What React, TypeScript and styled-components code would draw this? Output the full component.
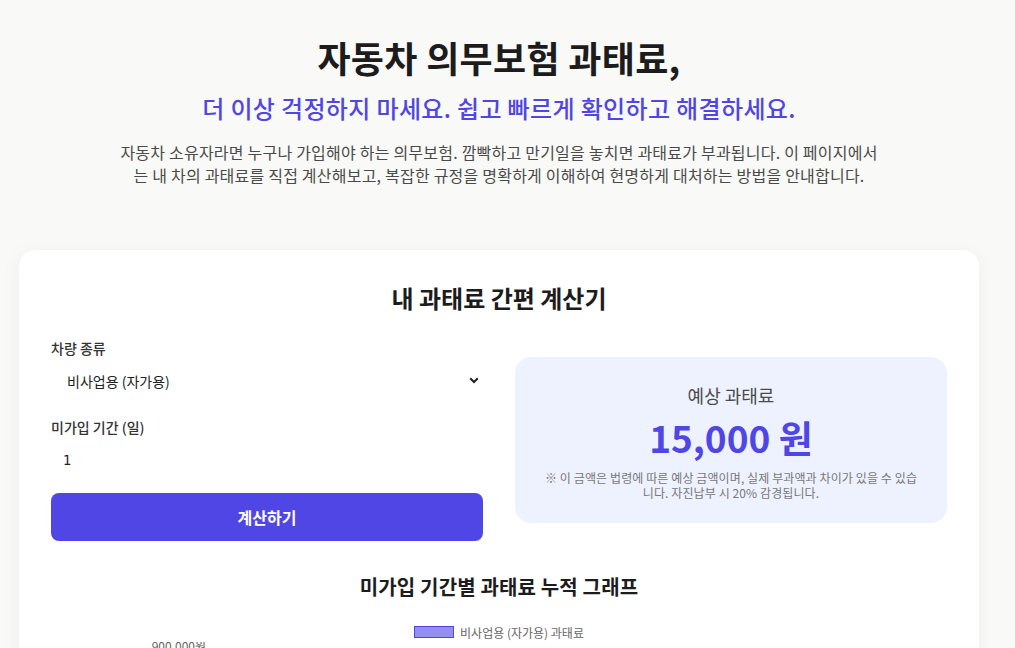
import React, { useState } from "react";
import styled, { createGlobalStyle } from "styled-components";

const GlobalStyle = createGlobalStyle`
  html, body { margin: 0; padding: 0; }
  body {
    background: #f9f9f7;
    font-family: "Noto Sans CJK KR", "Noto Sans", sans-serif;
    color: #1f1f1f;
    overflow: hidden;
  }
  * { box-sizing: border-box; }
`;

const Page = styled.div`
  width: 998px;
  padding-top: 34px;
`;

const Main = styled.main`
  max-width: 960px;
  margin: 0 auto;
`;

const Hero = styled.header`
  text-align: center;
  margin-bottom: 63px;
`;

const Title = styled.h1`
  margin: 0 0 10px;
  font-size: 36px;
  line-height: 47px;
  font-weight: 700;
  letter-spacing: 0.3px;
  color: #1c1c1c;
`;

const Subtitle = styled.h2`
  margin: 0 0 16px;
  font-size: 24px;
  line-height: 34px;
  font-weight: 500;
  letter-spacing: 0.35px;
  color: #4f46e5;
`;

const Intro = styled.p`
  margin: 0 auto;
  max-width: 762px;
  font-size: 16px;
  line-height: 23px;
  letter-spacing: 0.22px;
  color: #4a4a4a;
`;

const Card = styled.section`
  background: #ffffff;
  border-radius: 16px;
  padding: 32px;
  box-shadow: 0 4px 20px rgba(0, 0, 0, 0.05);
`;

const CardTitle = styled.h3`
  margin: 0 0 24px;
  text-align: center;
  font-size: 24px;
  line-height: 32px;
  font-weight: 700;
  color: #1c1c1c;
`;

const Grid = styled.div`
  display: grid;
  grid-template-columns: 1fr 1fr;
  gap: 32px;
  align-items: center;
`;

const Form = styled.div`
  display: flex;
  flex-direction: column;
`;

const Field = styled.div<{ $mb?: number }>`
  display: flex;
  flex-direction: column;
  margin-bottom: ${(p) => p.$mb ?? 20}px;
`;

const Label = styled.label`
  font-size: 14px;
  line-height: 20px;
  font-weight: 500;
  color: #333;
  margin-bottom: 6px;
`;

const SelectWrap = styled.div`
  position: relative;
`;

const Select = styled.select`
  appearance: none;
  width: 100%;
  height: 33px;
  border: none;
  background: #fff;
  padding: 1px 24px 0 16px;
  font-family: "Noto Sans CJK KR", sans-serif;
  font-size: 14px;
  color: #222;
  outline: none;
`;

const Chevron = styled.svg`
  position: absolute;
  right: 4px;
  top: 13px;
  pointer-events: none;
`;

const Input = styled.input`
  width: 100%;
  height: 34px;
  border: none;
  background: #fff;
  padding: 0 12px;
  font-family: "DejaVu Sans", sans-serif;
  font-size: 13.333px;
  color: #222;
  outline: none;
`;

const Button = styled.button`
  height: 48px;
  border: none;
  border-radius: 8px;
  background: #4f46e5;
  color: #fff;
  font-family: "Noto Sans CJK KR", sans-serif;
  font-size: 16px;
  font-weight: 700;
  cursor: pointer;
`;

const ResultBox = styled.div`
  background: #eef2ff;
  border-radius: 16px;
  padding: 25px 26px 23px;
  text-align: center;
`;

const ResultLabel = styled.div`
  font-size: 18px;
  line-height: 27px;
  color: #4a4a4a;
`;

const Amount = styled.div`
  margin-top: 5px;
  font-size: 37px;
  line-height: 47px;
  font-weight: 700;
  color: #4f46e5;
`;

const Note = styled.p`
  margin: 9px 0 0;
  font-size: 12px;
  line-height: 15px;
  letter-spacing: 0.1px;
  color: #777;
`;

const ChartSection = styled.div`
  margin-top: 32px;
`;

const ChartTitle = styled.h3`
  margin: 0 0 25px;
  text-align: center;
  font-size: 20px;
  line-height: 28px;
  font-weight: 700;
  letter-spacing: 0.15px;
  color: #1c1c1c;
`;

const Legend = styled.div`
  display: flex;
  justify-content: center;
  align-items: center;
  gap: 6px;
  height: 12px;
  font-size: 12px;
  color: #666;
`;

const LegendSwatch = styled.span`
  width: 40px;
  height: 12px;
  background: rgba(79, 70, 229, 0.6);
  border: 1px solid #4f46e5;
`;

const ChartSvg = styled.svg`
  display: block;
  margin-top: 4px;
  width: 100%;
  height: 320px;
`;

export default function App() {
  const [kind, setKind] = useState("private");
  const [days, setDays] = useState("1");

  return (
    <>
      <GlobalStyle />
      <Page>
        <Main>
          <Hero>
            <Title>자동차 의무보험 과태료,</Title>
            <Subtitle>더 이상 걱정하지 마세요. 쉽고 빠르게 확인하고 해결하세요.</Subtitle>
            <Intro>
              자동차 소유자라면 누구나 가입해야 하는 의무보험. 깜빡하고 만기일을 놓치면 과태료가 부과됩니다. 이 페이지에서는 내 차의 과태료를 직접 계산해보고, 복잡한 규정을 명확하게 이해하여 현명하게 대처하는 방법을 안내합니다.
            </Intro>
          </Hero>

          <Card>
            <CardTitle>내 과태료 간편 계산기</CardTitle>
            <Grid>
              <Form>
                <Field>
                  <Label htmlFor="kind">차량 종류</Label>
                  <SelectWrap>
                    <Select id="kind" value={kind} onChange={(e) => setKind(e.target.value)}>
                      <option value="private">비사업용 (자가용)</option>
                      <option value="business">사업용</option>
                    </Select>
                    <Chevron width="10" height="7" viewBox="0 0 10 7">
                      <path d="M1.2 1.2 L5 5 L8.8 1.2" fill="none" stroke="#222" strokeWidth="2" />
                    </Chevron>
                  </SelectWrap>
                </Field>
                <Field $mb={16}>
                  <Label htmlFor="days">미가입 기간 (일)</Label>
                  <Input id="days" type="text" value={days} onChange={(e) => setDays(e.target.value)} />
                </Field>
                <Button>계산하기</Button>
              </Form>

              <ResultBox>
                <ResultLabel>예상 과태료</ResultLabel>
                <Amount>15,000 원</Amount>
                <Note>※ 이 금액은 법령에 따른 예상 금액이며, 실제 부과액과 차이가 있을 수 있습니다. 자진납부 시 20% 감경됩니다.</Note>
              </ResultBox>
            </Grid>

            <ChartSection>
              <ChartTitle>미가입 기간별 과태료 누적 그래프</ChartTitle>
              <Legend>
                <LegendSwatch />
                <span>비사업용 (자가용) 과태료</span>
              </Legend>
              <ChartSvg viewBox="0 0 896 320" preserveAspectRatio="none">
                <text x="155" y="6" textAnchor="end" dominantBaseline="middle" fontSize="12" fill="#666" fontFamily="Noto Sans CJK KR, sans-serif">
                  900,000원
                </text>
              </ChartSvg>
            </ChartSection>
          </Card>
        </Main>
      </Page>
    </>
  );
}
